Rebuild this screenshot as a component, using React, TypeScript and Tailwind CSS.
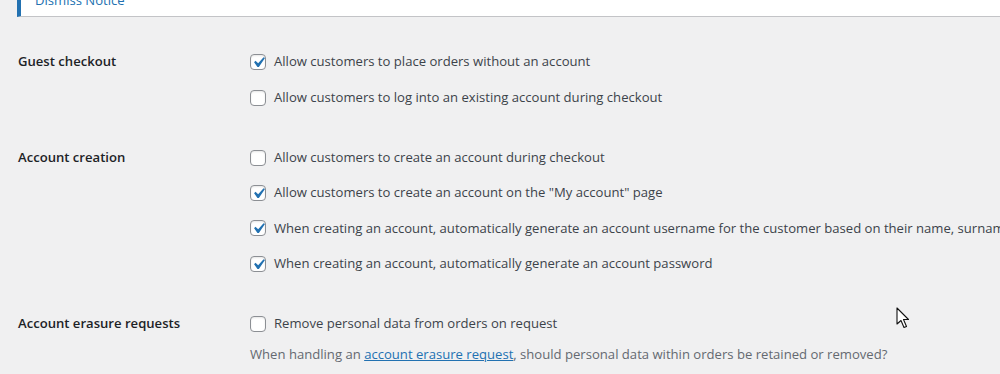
import React from "react";

const Check = ({ checked }: { checked: boolean }) => (
  <span className="relative inline-flex h-4 w-4 shrink-0 items-center justify-center rounded-[4px] border border-[#8c8f94] bg-white shadow-[inset_0_1px_2px_rgba(0,0,0,0.1)]">
    {checked && (
      <svg viewBox="0 0 20 20" className="absolute left-[-3px] top-[-3px] h-[21px] w-[21px]" fill="#2271b1">
        <path d="M14.83 4.89l1.34.94-5.81 8.38H9.02L5.78 9.67l1.34-1.25 2.57 2.4z" />
      </svg>
    )}
  </span>
);

const Option = ({ checked, text, h = "h-[35.33px]" }: { checked: boolean; text: string; h?: string }) => (
  <div className={"flex items-center gap-2 whitespace-nowrap " + h}>
    <Check checked={checked} />
    <span>{text}</span>
  </div>
);

const Section = ({ label, children, className = "" }: { label: string; children: React.ReactNode; className?: string }) => (
  <div className={"flex " + className}>
    <div className="flex h-[36px] w-[250px] shrink-0 items-center pl-[18px] font-semibold text-[#1d2327]">{label}</div>
    <div className="flex flex-col">{children}</div>
  </div>
);

export default function App() {
  return (
    <div
      className="relative h-[374px] w-[1000px] overflow-hidden bg-[#f0f0f1] text-[13.1px] text-[#3c434a]"
      style={{ fontFamily: '"Open Sans", "Noto Sans", sans-serif' }}
    >
      <div className="ml-[17px] h-[17px] overflow-hidden border-b border-l-4 border-b-[#c3c4c7] border-l-[#2271b1] bg-white">
        <div className="-mt-[9px] pl-[14px] text-[#2271b1]">Dismiss Notice</div>
      </div>

      <Section label="Guest checkout" className="mt-[27px]">
        <Option checked h="h-[36px]" text="Allow customers to place orders without an account" />
        <Option checked={false} h="h-[36px]" text="Allow customers to log into an existing account during checkout" />
      </Section>

      <Section label="Account creation" className="mt-[24px]">
        <Option checked={false} text="Allow customers to create an account during checkout" />
        <Option checked text={'Allow customers to create an account on the "My account" page'} />
        <Option checked text="When creating an account, automatically generate an account username for the customer based on their name, surname or email" />
        <Option checked text="When creating an account, automatically generate an account password" />
      </Section>

      <Section label="Account erasure requests" className="mt-[25px]">
        <Option checked={false} h="h-[36px]" text="Remove personal data from orders on request" />
        <p className="leading-[24px] text-[#646970]">
          When handling an{" "}
          <a href="#" className="text-[#2271b1] underline">
            account erasure request
          </a>
          , should personal data within orders be retained or removed?
        </p>
      </Section>

      <svg className="absolute left-[896px] top-[307px]" width="14" height="22" viewBox="0 0 14 22">
        <path d="M1 1 L1 17 L5 13.5 L8 20.5 L10.5 19.5 L7.5 12.5 L12.5 12.5 Z" fill="white" stroke="#111" strokeWidth="1.1" strokeLinejoin="round" />
      </svg>
    </div>
  );
}
